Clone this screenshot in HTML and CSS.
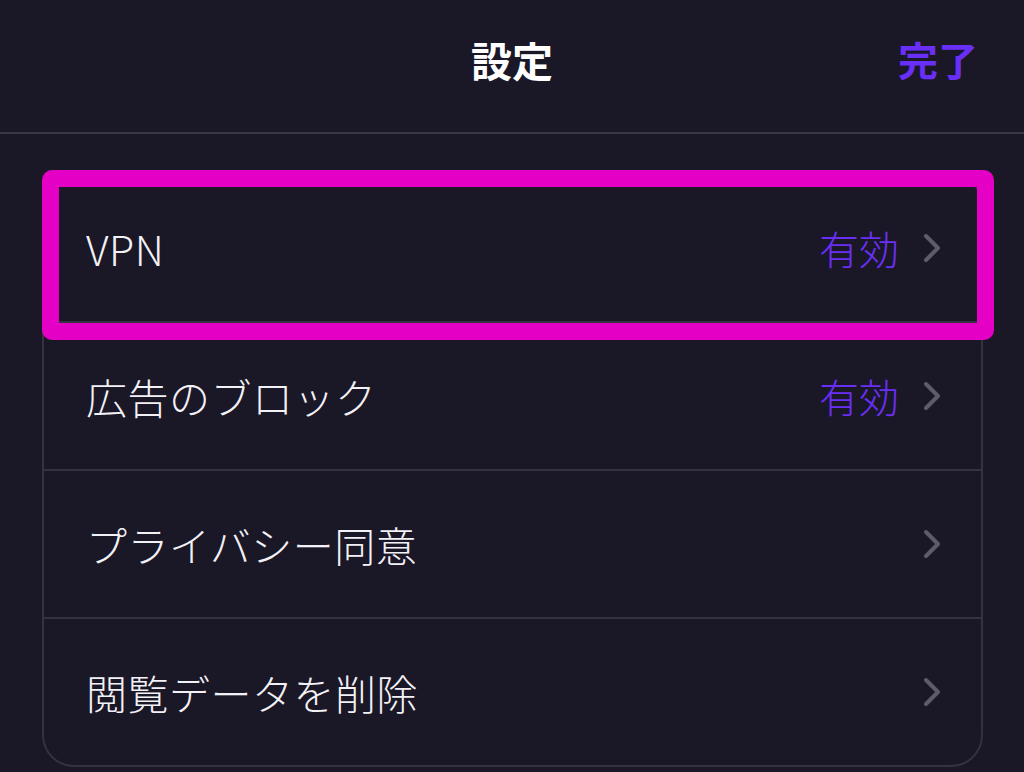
FILE: index.html
```html
<!DOCTYPE html>
<html>
  <head>
    <meta charset="utf-8" />
    <link rel="stylesheet" href="styles.css">
  </head>
  <body>
    <div class="header">
      <div class="header-side"></div>
      <div class="title">設定</div>
      <div class="header-side done">完了</div>
    </div>

    <div class="settings-card">
      <div class="highlight"></div>

      <div class="setting-row">
        <span class="setting-label">VPN</span>
        <span class="setting-value">有効</span>
        <svg class="chevron" viewBox="0 0 18 30"><polyline points="3,3 15,15 3,27" /></svg>
      </div>

      <div class="setting-row">
        <span class="setting-label">広告のブロック</span>
        <span class="setting-value">有効</span>
        <svg class="chevron" viewBox="0 0 18 30"><polyline points="3,3 15,15 3,27" /></svg>
      </div>

      <div class="setting-row">
        <span class="setting-label">プライバシー同意</span>
        <svg class="chevron" viewBox="0 0 18 30"><polyline points="3,3 15,15 3,27" /></svg>
      </div>

      <div class="setting-row">
        <span class="setting-label">閲覧データを削除</span>
        <svg class="chevron" viewBox="0 0 18 30"><polyline points="3,3 15,15 3,27" /></svg>
      </div>
    </div>
  </body>
</html>
```

FILE: styles.css
```css
body {
  margin: 0;
  height: 772px;
  overflow: hidden;
  font-family: "Noto Sans CJK JP", "Noto Sans", sans-serif;
  background: #1a1727;
  color: #f2f1f5;
}

.header {
  height: 118px;
  padding: 0 46px 14px;
  display: grid;
  grid-template-columns: 1fr auto 1fr;
  align-items: center;
  border-bottom: 2px solid #3a3744;
}

.title {
  font-size: 41px;
  font-weight: 700;
  color: #ffffff;
}

.done {
  text-align: right;
  font-size: 40px;
  font-weight: 700;
  color: #6a2ff6;
}

.settings-card {
  position: relative;
  margin: 39px 41px 0 42px;
  border: 2px solid #35323f;
  border-radius: 32px;
}

.setting-row {
  height: 146px;
  padding: 0 40px 0 42px;
  display: flex;
  align-items: center;
  border-bottom: 2px solid #35323f;
}

.setting-row:last-child {
  border-bottom: none;
}

.setting-label {
  flex: 1;
  font-size: 41px;
  font-weight: 300;
  letter-spacing: 0.5px;
}

.setting-value {
  font-size: 40px;
  font-weight: 300;
  color: #6a2ff6;
  margin-right: 24px;
}

.chevron {
  width: 18px;
  height: 30px;
  fill: none;
  stroke: #5f5c69;
  stroke-width: 4;
  stroke-linecap: round;
  stroke-linejoin: round;
}

.highlight {
  position: absolute;
  top: -5px;
  left: -2px;
  width: 918px;
  height: 136px;
  border: 17px solid #e400c4;
  border-radius: 10px;
  pointer-events: none;
}
```
